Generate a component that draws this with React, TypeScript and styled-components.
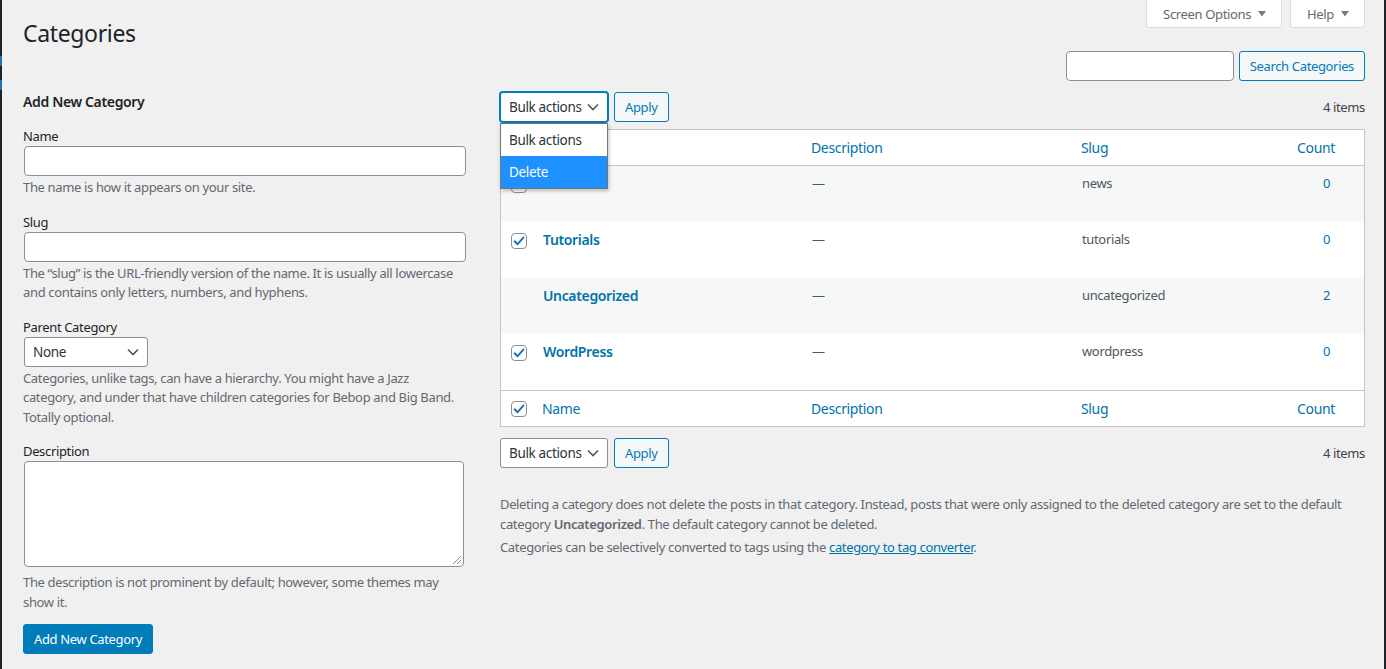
import styled, { createGlobalStyle } from 'styled-components'

const FONT = `"Noto Sans", "Open Sans", sans-serif`

const GlobalStyle = createGlobalStyle`
  html, body {
    margin: 0;
    padding: 0;
    background: #f0f0f1;
    font-family: ${FONT};
    font-size: 13px;
    letter-spacing: -0.027em;
    color: #3c434a;
  }
  * { box-sizing: border-box; }
  button { letter-spacing: -0.027em; }
`

type Category = {
  name: string
  slug: string
  count: number
  checked: boolean
  selectable: boolean
}

const categories: Array<Category> = [
  { name: "News", slug: "news", count: 0, checked: true, selectable: true },
  { name: "Tutorials", slug: "tutorials", count: 0, checked: true, selectable: true },
  { name: "Uncategorized", slug: "uncategorized", count: 2, checked: false, selectable: false },
  { name: "WordPress", slug: "wordpress", count: 0, checked: true, selectable: true },
]

function Chevron() {
  return (
    <svg width="12" height="8" viewBox="0 0 12 8">
      <path d="M1 1.5 L6 6.5 L11 1.5" fill="none" stroke="#50575e" strokeWidth="1.6" />
    </svg>
  )
}

function Triangle() {
  return (
    <svg width="8" height="6" viewBox="0 0 8 6">
      <path d="M0 0 H8 L4 5.5 Z" fill="#787c82" />
    </svg>
  )
}

function Checkbox({ checked }: { checked: boolean }) {
  return (
    <CheckBox>
      {checked && (
        <svg width="14" height="14" viewBox="0 0 14 14">
          <path d="M2.6 7.2 L5.6 10.2 L11.4 3.6" fill="none" stroke="#2271b1" strokeWidth="2" strokeLinecap="round" strokeLinejoin="round" />
        </svg>
      )}
    </CheckBox>
  )
}

function BulkSelect({ open }: { open?: boolean }) {
  return (
    <SelectWrap>
      <Select focused={open} width={108}>
        <span>Bulk actions</span>
        <Chevron />
      </Select>
      {open && (
        <DropList>
          <DropItem>Bulk actions</DropItem>
          <DropItem active>Delete</DropItem>
        </DropList>
      )}
    </SelectWrap>
  )
}

function App() {
  return (
    <>
      <GlobalStyle />
      <Frame>
        <AdminEdge />
        <Main>
          <Header>
            <Title>Categories</Title>
            <MetaLinks>
              <MetaTab>Screen Options <Triangle /></MetaTab>
              <MetaTab>Help <Triangle /></MetaTab>
            </MetaLinks>
          </Header>

          <SearchRow>
            <TextInput width={168} />
            <OutlineButton>Search Categories</OutlineButton>
          </SearchRow>

          <Columns>
            <LeftCol>
              <FormTitle>Add New Category</FormTitle>

              <Field>
                <Label>Name</Label>
                <TextInput />
                <Help>The name is how it appears on your site.</Help>
              </Field>

              <Field>
                <Label>Slug</Label>
                <TextInput />
                <Help>The “slug” is the URL-friendly version of the name. It is usually all lowercase and contains only letters, numbers, and hyphens.</Help>
              </Field>

              <Field>
                <Label>Parent Category</Label>
                <Select width={124}>
                  <span>None</span>
                  <Chevron />
                </Select>
                <Help>Categories, unlike tags, can have a hierarchy. You might have a Jazz category, and under that have children categories for Bebop and Big Band. Totally optional.</Help>
              </Field>

              <Field>
                <Label>Description</Label>
                <TextArea />
                <Help gap={6}>The description is not prominent by default; however, some themes may show it.</Help>
              </Field>

              <PrimaryButton>Add New Category</PrimaryButton>
            </LeftCol>

            <RightCol>
              <TableNav>
                <BulkSelect open />
                <OutlineButton>Apply</OutlineButton>
                <Items>4 items</Items>
              </TableNav>

              <Table>
                <HeadRow>
                  <CheckCell head><Checkbox checked={false} /></CheckCell>
                  <HeadCell>Name</HeadCell>
                  <HeadCell>Description</HeadCell>
                  <HeadCell>Slug</HeadCell>
                  <HeadCell align="right">Count</HeadCell>
                </HeadRow>

                {categories.map((c, i) => (
                  <BodyRow key={c.slug} striped={i % 2 === 0}>
                    <CheckCell>{c.selectable && <Checkbox checked={c.checked} />}</CheckCell>
                    <Cell><RowTitle>{c.name}</RowTitle></Cell>
                    <Cell>—</Cell>
                    <Cell>{c.slug}</Cell>
                    <CountCell>{c.count}</CountCell>
                  </BodyRow>
                ))}

                <HeadRow foot>
                  <CheckCell head><Checkbox checked /></CheckCell>
                  <HeadCell>Name</HeadCell>
                  <HeadCell>Description</HeadCell>
                  <HeadCell>Slug</HeadCell>
                  <HeadCell align="right">Count</HeadCell>
                </HeadRow>
              </Table>

              <TableNav bottom>
                <BulkSelect />
                <OutlineButton>Apply</OutlineButton>
                <Items>4 items</Items>
              </TableNav>

              <Notes>
                <Note>Deleting a category does not delete the posts in that category. Instead, posts that were only assigned to the deleted category are set to the default category <strong>Uncategorized</strong>. The default category cannot be deleted.</Note>
                <Note>Categories can be selectively converted to tags using the <NoteLink href="#">category to tag converter</NoteLink>.</Note>
              </Notes>
            </RightCol>
          </Columns>
        </Main>
        <ScrollEdge />
      </Frame>
    </>
  )
}

export default App

const Frame = styled.div`
  display: flex;
  min-height: 100vh;
`

const AdminEdge = styled.div`
  width: 2px;
  flex-shrink: 0;
  background: linear-gradient(to bottom, #1d2327 0 56px, #2271b1 56px 66px, #1d2327 66px 80px, #2271b1 80px 90px, #1d2327 90px);
`

const ScrollEdge = styled.div`
  width: 2px;
  flex-shrink: 0;
  background: #1d2327;
`

const Main = styled.main`
  flex: 1;
  padding: 0 19px 0 21px;
`

const Header = styled.header`
  display: flex;
  justify-content: space-between;
  align-items: flex-start;
  height: 48px;
`

const Title = styled.h1`
  margin: 18px 0 0;
  font-size: 23px;
  font-weight: 400;
  line-height: 30px;
  color: #1d2327;
`

const MetaLinks = styled.div`
  display: flex;
  gap: 8px;
`

const MetaTab = styled.button`
  display: flex;
  align-items: center;
  gap: 7px;
  height: 28px;
  padding: 0 15px 0 16px;
  background: #fff;
  border: 1px solid #dcdcde;
  border-top: none;
  border-radius: 0 0 4px 4px;
  font-family: ${FONT};
  font-size: 13px;
  color: #646970;
`

const SearchRow = styled.div`
  display: flex;
  justify-content: flex-end;
  gap: 5px;
  margin-top: 3px;
`

const TextInput = styled.div<{ width?: number }>`
  width: ${p => (p.width ? `${p.width}px` : '100%')};
  height: 30px;
  background: #fff;
  border: 1px solid #8c8f94;
  border-radius: 4px;
  margin-left: ${p => (p.width ? '0' : '1px')};
`

const OutlineButton = styled.button`
  height: 30px;
  padding: 0 10px;
  background: #f6f7f7;
  border: 1px solid #007cba;
  border-radius: 3px;
  color: #007cba;
  font-family: ${FONT};
  font-size: 13px;
  white-space: nowrap;
`

const PrimaryButton = styled.button`
  height: 30px;
  padding: 0 10px;
  background: #007cba;
  border: 1px solid #007cba;
  border-radius: 3px;
  color: #fff;
  font-family: ${FONT};
  font-size: 13px;
  margin-top: 12px;
`

const Columns = styled.div`
  display: grid;
  grid-template-columns: 442px 1fr;
  gap: 35px;
  margin-top: 11px;
`

const LeftCol = styled.section`
  display: flex;
  flex-direction: column;
  align-items: flex-start;
`

const FormTitle = styled.h2`
  margin: 0 0 14px;
  font-size: 14px;
  font-weight: 600;
  line-height: 20px;
  color: #1d2327;
`

const Field = styled.div`
  width: 100%;
  margin-bottom: 14px;
  &:last-of-type { margin-bottom: 0; }
`

const Label = styled.label`
  display: block;
  line-height: 20px;
  color: #1d2327;
`

const Help = styled.p<{ gap?: number }>`
  margin: ${p => p.gap ?? 2}px 0 0;
  line-height: 19.5px;
  color: #646970;
`

const Select = styled.div<{ width: number; focused?: boolean }>`
  display: flex;
  align-items: center;
  justify-content: space-between;
  width: ${p => p.width}px;
  height: 30px;
  padding: 0 8px;
  margin-left: 1px;
  background: #fff;
  border: 1px solid ${p => (p.focused ? '#007cba' : '#8c8f94')};
  box-shadow: ${p => (p.focused ? '0 0 0 1px #007cba' : 'none')};
  border-radius: 3px;
  font-size: 13.5px;
  white-space: nowrap;
  color: #2c3338;
`

const TextArea = styled.div`
  width: 440px;
  height: 106px;
  margin-left: 1px;
  background: #fff;
  border: 1px solid #8c8f94;
  border-radius: 4px;
  position: relative;
  &::after {
    content: '';
    position: absolute;
    right: 2px;
    bottom: 2px;
    width: 8px;
    height: 8px;
    background: linear-gradient(135deg, transparent 45%, #8c8f94 45% 53%, transparent 53% 70%, #8c8f94 70% 78%, transparent 78%);
  }
`

const RightCol = styled.section`
  display: flex;
  flex-direction: column;
`

const TableNav = styled.div<{ bottom?: boolean }>`
  display: flex;
  align-items: center;
  gap: 6px;
  height: 30px;
  margin: ${p => (p.bottom ? '11px 0 0' : '0 0 7px')};
`

const SelectWrap = styled.div`
  position: relative;
  margin-left: -1px;
`

const DropList = styled.div`
  position: absolute;
  top: calc(100% + 1px);
  left: 1px;
  width: 108px;
  background: #fff;
  border: 1px solid #767676;
  box-shadow: 1px 2px 4px rgba(0, 0, 0, 0.25);
  z-index: 5;
`

const DropItem = styled.div<{ active?: boolean }>`
  height: 32px;
  line-height: 32px;
  padding: 0 8px;
  font-size: 13.5px;
  white-space: nowrap;
  background: ${p => (p.active ? '#1e90ff' : '#fff')};
  color: ${p => (p.active ? '#fff' : '#2c3338')};
`

const Items = styled.span`
  margin-left: auto;
  color: #3c434a;
`

const Table = styled.div`
  background: #fff;
  border: 1px solid #c3c4c7;
`

const grid = `
  display: grid;
  grid-template-columns: 32px 269px 270px 198px 1fr;
`

const HeadRow = styled.div<{ foot?: boolean }>`
  ${grid}
  align-items: center;
  height: 36px;
  border-${p => (p.foot ? 'top' : 'bottom')}: 1px solid #c3c4c7;
`

const HeadCell = styled.div<{ align?: 'right' }>`
  padding: ${p => (p.align === 'right' ? '0 29px 0 10px' : '0 10px 0 9px')};
  text-align: ${p => p.align ?? 'left'};
  font-size: 14px;
  color: #0073aa;
`

const BodyRow = styled.div<{ striped: boolean }>`
  ${grid}
  height: 56px;
  background: ${p => (p.striped ? '#f6f7f7' : '#fff')};
`

const Cell = styled.div`
  padding: 8px 10px;
  line-height: 19.5px;
  color: #50575e;
`

const CountCell = styled(Cell)`
  text-align: right;
  padding-right: 34px;
  color: #0073aa;
`

const CheckCell = styled.div<{ head?: boolean }>`
  padding: ${p => (p.head ? '0 0 0 10px' : '11px 0 0 10px')};
`

const CheckBox = styled.span`
  display: flex;
  align-items: center;
  justify-content: center;
  width: 16px;
  height: 16px;
  background: #fff;
  border: 1px solid #8c8f94;
  border-radius: 4px;
`

const RowTitle = styled.a`
  font-size: 14px;
  font-weight: 600;
  color: #0073aa;
`

const Notes = styled.div`
  margin-top: 27px;
`

const Note = styled.p`
  margin: 0 0 4px;
  line-height: 19.5px;
  color: #646970;
  strong { font-weight: 600; }
`

const NoteLink = styled.a`
  color: #0073aa;
  text-decoration: underline;
`
